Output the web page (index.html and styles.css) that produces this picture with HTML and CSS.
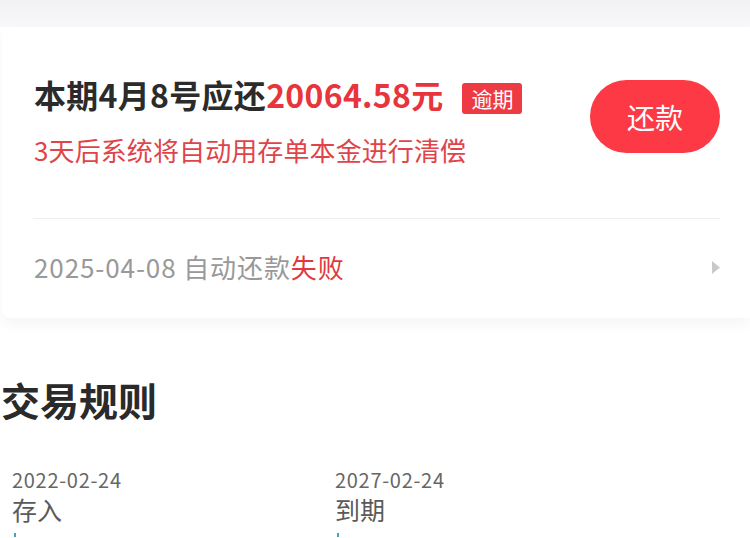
FILE: index.html
```html
<!DOCTYPE html>
<html lang="zh-CN">
<head>
<meta charset="utf-8">
<link rel="stylesheet" href="styles.css">
</head>
<body>
<div class="top-strip"></div>
<div class="card">
  <div class="card-main">
    <div class="info">
      <div class="title-line">
        <span class="title">本期4月8号应还<span class="amount">20064.58元</span></span>
        <span class="badge">逾期</span>
      </div>
      <div class="sub">3天后系统将自动用存单本金进行清偿</div>
    </div>
    <button class="pay-btn">还款</button>
  </div>
  <div class="divider"></div>
  <div class="row">
    <span class="row-text">2025-04-08 自动还款<span class="fail">失败</span></span>
    <svg class="chev" width="8" height="13" viewBox="0 0 8 13"><path d="M0 0 L8 6.5 L0 13 Z" fill="#c9c9c9"/></svg>
  </div>
</div>
<h2 class="section-title">交易规则</h2>
<div class="rules">
  <div class="rule">
    <div class="rule-date">2022-02-24</div>
    <div class="rule-label">存入</div>
    <div class="rule-mark"></div>
  </div>
  <div class="rule">
    <div class="rule-date">2027-02-24</div>
    <div class="rule-label">到期</div>
    <div class="rule-mark"></div>
  </div>
</div>
</body>
</html>
```
FILE: styles.css
```css
* { box-sizing: border-box; }
html, body { margin: 0; padding: 0; }
body {
  background: #ffffff;
  font-family: "Noto Sans CJK SC", "Noto Sans", sans-serif;
  width: 750px;
  overflow: hidden;
}
.top-strip {
  height: 27px;
  background: linear-gradient(#f2f2f4, #f8f8fa);
}
.card {
  margin-left: 2px;
  background: #ffffff;
  border-radius: 8px 0 0 8px;
  box-shadow: 0 6px 14px rgba(0, 0, 0, 0.045);
}
.card-main {
  height: 191px;
  display: flex;
  justify-content: space-between;
  align-items: flex-start;
  padding: 47px 30px 0 32px;
}
.info { display: flex; flex-direction: column; gap: 19px; }
.title-line { display: flex; align-items: flex-start; gap: 19px; }
.title {
  font-size: 32px;
  line-height: 40px;
  font-weight: 700;
  color: #2b2b2b;
  letter-spacing: 0.3px;
}
.amount { color: #e8343c; }
.badge {
  background: #ee3a42;
  color: #ffffff;
  font-size: 21px;
  line-height: 31px;
  height: 31px;
  padding: 0 9px;
  border-radius: 3px;
  margin-top: 9px;
}
.sub {
  font-size: 26px;
  line-height: 34px;
  color: #e0444a;
  letter-spacing: 0.1px;
}
.pay-btn {
  margin-top: 6px;
  width: 130px;
  height: 73px;
  border: none;
  border-radius: 37px;
  background: #fc3944;
  color: #ffffff;
  font-family: inherit;
  font-size: 28px;
  padding: 0;
}
.divider {
  height: 1px;
  background: #eeeeee;
  margin: 0 30px 0 31px;
}
.row {
  height: 99px;
  display: flex;
  align-items: center;
  justify-content: space-between;
  padding: 0 30px 0 32px;
}
.row-text {
  font-size: 26px;
  line-height: 34px;
  color: #999999;
  letter-spacing: 0.9px;
  margin-top: -3px;
}
.fail { color: #e0383e; }
.chev { display: block; margin-top: -2px; }
.section-title {
  margin: 58px 0 0 0;
  padding-left: 1px;
  font-size: 39px;
  line-height: 46px;
  font-weight: 700;
  color: #2a2a2a;
}
.rules {
  display: grid;
  grid-template-columns: 323px 323px;
  padding-left: 12px;
  margin-top: 45px;
}
.rule-date {
  font-size: 20px;
  line-height: 26px;
  color: #666666;
  letter-spacing: 0.7px;
}
.rule-label {
  font-size: 25px;
  line-height: 32px;
  color: #5a5a5a;
  margin-top: 0;
}
.rule-mark {
  margin: 8px 0 0 2px;
  width: 2px;
  height: 4px;
  background: #4a9fc4;
}
```
